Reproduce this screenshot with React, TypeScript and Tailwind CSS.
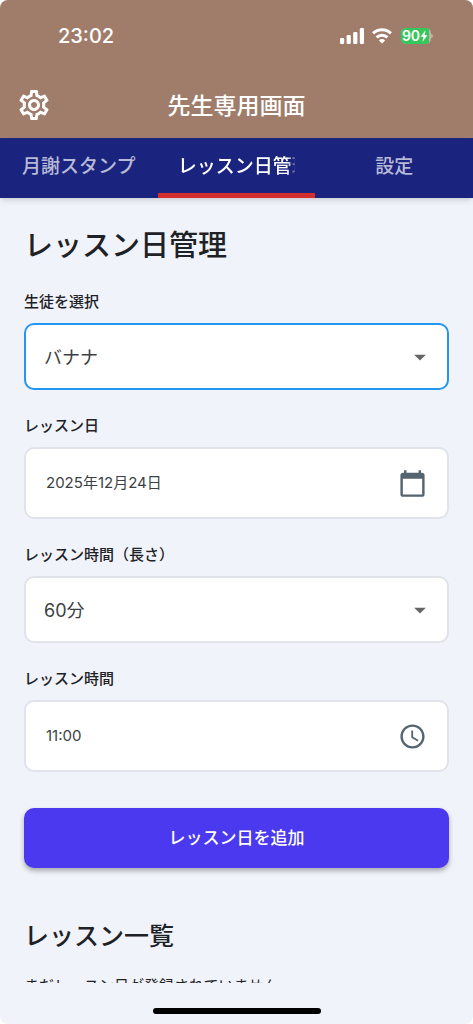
import { useState } from "react";
import type { ReactNode } from "react";
import {
  MdAccessTime,
  MdArrowDropDown,
  MdCalendarToday,
  MdOutlineSettings,
} from "react-icons/md";

type SelectFieldProps = {
  id: string;
  label: string;
  options: string[];
  active?: boolean;
};

type PickerFieldProps = {
  id: string;
  label: string;
  value: string;
  buttonLabel: string;
  icon: ReactNode;
};

const tabs = ["月謝スタンプ", "レッスン日管理", "設定"];

const StatusBar = () => {
  return (
    <div className="h-[71px] pl-[58px] pr-10 flex items-center justify-between">
      <span className="text-xl leading-6 font-medium">23:02</span>
      <div className="flex items-center">
        {/* signal */}
        <svg className="w-6 h-4" viewBox="0 0 24 16" fill="currentColor">
          <rect x="0" y="10" width="4.2" height="6" rx="1.2" />
          <rect x="6.6" y="7" width="4.2" height="9" rx="1.2" />
          <rect x="13.2" y="4" width="4.2" height="12" rx="1.2" />
          <rect x="19.8" y="0" width="4.2" height="16" rx="1.2" />
        </svg>
        {/* wifi */}
        <svg className="w-5 h-4 ml-2" viewBox="0 0 20 16" fill="none">
          <path
            d="M1.1 5.4a12.6 12.6 0 0 1 17.8 0"
            stroke="currentColor"
            strokeWidth="3"
          />
          <path
            d="M4.6 9.4a7.7 7.7 0 0 1 10.8 0"
            stroke="currentColor"
            strokeWidth="2.9"
          />
          <path
            d="M10 15.4 6.9 12.4a4.5 4.5 0 0 1 6.2 0Z"
            fill="currentColor"
          />
        </svg>
        {/* battery */}
        <div className="ml-[9px] flex items-center">
          <div className="w-[30px] h-4 rounded-[5px] overflow-hidden flex bg-white/40">
            <div className="w-7 h-4 bg-[#34c759] flex items-center justify-center">
              <span className="text-sm leading-4 font-semibold">90</span>
              <svg className="w-2 h-3" viewBox="0 0 8 12" fill="currentColor">
                <path d="M5.6 0 .6 6.8h2.8L2.4 12l5-6.8H4.6Z" />
              </svg>
            </div>
          </div>
          <div className="w-0.5 h-1 rounded-r-full bg-white/40" />
        </div>
      </div>
    </div>
  );
};

const SelectField = ({ id, label, options, active }: SelectFieldProps) => {
  return (
    <div>
      <label htmlFor={id} className="block text-[15px] leading-5 font-medium">
        {label}
      </label>
      <div className="relative mt-[11px]">
        <select
          id={id}
          className={
            active
              ? "block w-full h-[67px] appearance-none rounded-[10px] border-2 border-[#2196f3] bg-white px-[18px] pt-0.5 text-lg text-[#3c3f43] outline-none"
              : "block w-full h-[67px] appearance-none rounded-[10px] border-2 border-[#e0e3e9] bg-white px-[18px] pt-0.5 text-lg text-[#3c3f43] outline-none"
          }
        >
          {options.map((option) => (
            <option key={option}>{option}</option>
          ))}
        </select>
        <MdArrowDropDown className="absolute right-[15px] inset-y-0 my-auto size-7 text-[#666] pointer-events-none" />
      </div>
    </div>
  );
};

const PickerField = ({ id, label, value, buttonLabel, icon }: PickerFieldProps) => {
  return (
    <div>
      <label htmlFor={id} className="block text-[15px] leading-5 font-medium">
        {label}
      </label>
      <div className="mt-[11px] h-[72px] rounded-[10px] border-2 border-[#e0e3e9] bg-white px-5 flex items-center">
        <input
          type="text"
          id={id}
          defaultValue={value}
          className="flex-1 min-w-0 text-[15px] text-[#3c3f43] outline-none"
        />
        <button type="button" aria-label={buttonLabel} className="text-[#546470]">
          {icon}
        </button>
      </div>
    </div>
  );
};

const App = () => {
  const [current, setCurrent] = useState(1);

  return (
    <div
      lang="ja"
      className="h-screen flex flex-col overflow-hidden rounded-lg bg-[#f0f3f9] text-[#1e2226] font-['Inter','Noto_Sans_CJK_JP',sans-serif]"
    >
      {/* header */}
      <header className="bg-[#a07d6b] text-white">
        <StatusBar />
        <div className="h-[67px] px-4 grid grid-cols-[36px_1fr_36px] items-center">
          <button type="button" aria-label="設定を開く">
            <MdOutlineSettings className="size-9" />
          </button>
          <h1 className="pt-0.5 text-center text-[23px] leading-8 font-medium">
            先生専用画面
          </h1>
        </div>
      </header>

      {/* tabs */}
      <nav className="relative grid grid-cols-3 bg-[#1a237e] shadow-md">
        {tabs.map((tab, index) => (
          <button
            type="button"
            key={tab}
            onClick={() => setCurrent(index)}
            className={
              index === current
                ? "h-[60px] px-5 pt-1 border-b-[5px] border-[#d32f2f] text-white text-[19px] font-medium"
                : "h-[60px] px-5 pt-1 border-b-[5px] border-transparent text-white/70 text-[19px] font-medium"
            }
          >
            {/* long names fade out, short ones stay solid */}
            <span
              className={
                tab.length > 6
                  ? "block overflow-hidden whitespace-nowrap mask-[linear-gradient(to_right,black_calc(100%-8px),rgba(0,0,0,0.2))]"
                  : "block whitespace-nowrap"
              }
            >
              {tab}
            </span>
          </button>
        ))}
      </nav>

      {/* content */}
      <main className="flex-1 min-h-0 overflow-hidden px-6 pt-7">
        <h2 className="text-[29px] leading-10 font-medium">レッスン日管理</h2>
        <form
          className="mt-[26px] flex flex-col gap-[26px]"
          onSubmit={(e) => e.preventDefault()}
        >
          <SelectField
            id="student"
            label="生徒を選択"
            options={["バナナ"]}
            active
          />
          <PickerField
            id="date"
            label="レッスン日"
            value="2025年12月24日"
            buttonLabel="日付を選択"
            icon={<MdCalendarToday className="size-[29px]" />}
          />
          <SelectField
            id="length"
            label="レッスン時間（長さ）"
            options={["60分"]}
          />
          <PickerField
            id="time"
            label="レッスン時間"
            value="11:00"
            buttonLabel="時間を選択"
            icon={<MdAccessTime className="size-[29px]" />}
          />
          <button
            type="submit"
            className="mt-2.5 h-[60px] pt-0.5 rounded-[10px] bg-[#4b39ef] text-white text-[17px] font-medium shadow-[0_3px_5px_rgba(0,0,0,0.3)]"
          >
            レッスン日を追加
          </button>
        </form>
        <h3 className="mt-[50px] text-[25px] leading-9 font-medium">
          レッスン一覧
        </h3>
        <p className="mt-5 text-[15px] leading-6">
          まだレッスン日が登録されていません
        </p>
      </main>

      {/* home indicator */}
      <footer className="h-[41px] pt-[25px]">
        <div className="mx-auto w-[168px] h-1.5 rounded-full bg-black" />
      </footer>
    </div>
  );
};

export default App;
